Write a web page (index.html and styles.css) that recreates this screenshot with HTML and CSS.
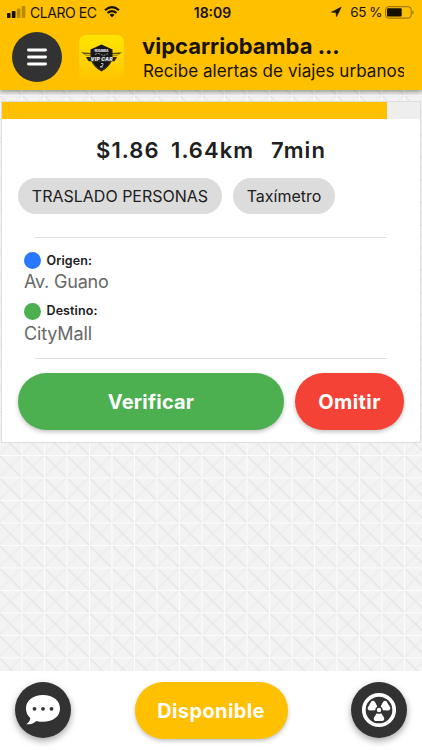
FILE: index.html
```html
<!DOCTYPE html>
<html lang="es">
<head>
<meta charset="utf-8">
<title>vipcarriobamba</title>
<link rel="stylesheet" href="styles.css">
</head>
<body>
<div class="app">
  <header class="header">
    <div class="status">
      <div class="status-left">
        <svg class="signal" width="19" height="12" viewBox="0 0 19 12"><rect x="0" y="7" width="3.5" height="5" rx=".8"/><rect x="4.8" y="5" width="3.7" height="7" rx=".8"/><g opacity=".3"><rect x="9.8" y="2.5" width="3.6" height="9.5" rx=".8"/><rect x="14.7" y="0" width="3.6" height="12" rx=".8"/></g></svg>
        <span class="carrier">CLARO EC</span>
        <svg class="wifi" width="16" height="12" viewBox="0 0 16 12"><g fill="none" stroke="#171200" stroke-width="2.1"><path d="M1 4.2Q8-2 15 4.2"/><path d="M3.5 7Q8 3.1 12.5 7"/></g><path d="M5.5 8.8Q8 6.8 10.5 8.8L8 11.6Z"/></svg>
      </div>
      <span class="clock">18:09</span>
      <div class="status-right">
        <svg width="11" height="12" viewBox="0 0 12 12"><path d="M.5 6.200 11.200.6 6 11.200 5.500 6.500Z" stroke="#171200" stroke-width=".6"/></svg>
        <span class="percent">65 %</span>
        <svg width="30" height="13" viewBox="0 0 30 13"><rect x=".6" y=".7" width="25.6" height="11.4" rx="3" fill="none" stroke="#8d6a00"/><rect x="2" y="2.3" width="14.7" height="8.2" rx="1"/><path d="M27.4 4.2q2.6 2.2 0 4.4z" fill="#8d6a00"/></svg>
      </div>
    </div>
    <div class="brand">
      <div class="menu"><svg width="20" height="18" viewBox="0 0 20 18"><path d="M1.4 2h17.2M1.4 9h17.2M1.4 16h17.2" stroke="#fff" stroke-width="2.8" stroke-linecap="round"/></svg></div>
      <div class="logo">
        <svg width="45" height="45" viewBox="0 0 45 45">
          <path d="M2 17.2 13 18v2.4H6.5ZM43 17.2 32 18v2.4h6.5Z" fill="#665500"/>
          <path d="M5 19h9v1H6ZM31 19h9l-1 1h-8Z" fill="#d7b600"/>
          <path d="M22.5 9.5 33.5 14.5V24Q31 32 22.5 36.5 14 32 11.5 24V14.5Z" fill="#171717"/>
          <path d="M13 26.2h19Q29.5 32 22.5 35.2 15.5 32 13 26.2" fill="none" stroke="#635b24" stroke-width=".6"/>
          <path d="M7 22h31l-2.5 4.3h-26Z" fill="#222"/>
          <path d="M16 19.5q3-2 6 0t7-1" fill="none" stroke="#bbb" stroke-width=".8" stroke-dasharray="2 1"/>
          <text class="logo-small" x="22.5" y="17.2" text-anchor="middle" textLength="14">RIOBAMBA</text>
          <text class="logo-name" x="22.5" y="25.8" text-anchor="middle" textLength="22">VIP CAR</text>
          <path d="M22 28.5h2v2l-3 1.5h3" fill="none" stroke="#ddd" stroke-width=".8"/>
        </svg>
      </div>
      <div class="titles"><h1 class="title">vipcarriobamba ...</h1><p class="subtitle">Recibe alertas de viajes urbanos</p></div>
    </div>
  </header>
  <main class="content">
    <section class="card">
      <div class="progress"><div class="progress-fill"></div></div>
      <div class="summary"><span>$1.86</span><span class="distance">1.64km</span><span class="time">7min</span></div>
      <div class="chips"><span class="chip chip-service">TRASLADO PERSONAS</span><span class="chip chip-meter">Taxímetro</span></div>
      <div class="route">
        <div class="stop"><div class="label"><i class="dot blue"></i><span>Origen:</span></div><div class="place guano">Av. Guano</div></div>
        <div class="stop"><div class="label label-end"><i class="dot green"></i><span>Destino:</span></div><div class="place">CityMall</div></div>
      </div>
      <div class="actions"><button class="btn verify">Verificar</button><button class="btn skip">Omitir</button></div>
    </section>
  </main>
  <footer class="footer">
    <div class="round"><svg width="36" height="32" viewBox="0 0 36 32"><path d="M18 1C8 1 1 6.5 1 14.500c0 4 1.600 7.200 4.300 9.500-.3 3-1.800 4.800-4 6.200 4.200.5 7.500-1 10.200-3.300 2 .6 4.200.9 6.500.9 10 0 17-5.400 17-13.300S28 1 18 1Z" fill="#fff"/><g fill="#323232"><circle cx="9.500" cy="14.800" r="1.900"/><circle cx="18" cy="14.800" r="1.900"/><circle cx="26.500" cy="14.800" r="1.900"/></g></svg></div>
    <button class="btn available">Disponible</button>
    <div class="round"><svg width="36" height="36" viewBox="-18 -18 36 36"><circle r="15.200" fill="none" stroke="#fff" stroke-width="3.700"/><g fill="#fff"><circle r="2.200"/><path id="blade" d="M-2.200 3.200Q0 4.400 2.200 3.200L5 7.500Q5.900 10 3.800 10.900H-3.800Q-5.900 10-5 7.500Z"/><use href="#blade" transform="rotate(120)"/><use href="#blade" transform="rotate(240)"/></g></svg></div>
  </footer>
</div>
</body>
</html>
```

FILE: styles.css
```css
* { box-sizing: border-box; }
body { margin: 0; font-family: Inter, "Liberation Sans", sans-serif; color: #202020; }
svg { display: block; flex: none; }
h1, p { margin: 0; }
button { border: 0; padding: 0; font-family: inherit; }

.app { width: 422px; height: 750px; display: flex; flex-direction: column; overflow: hidden; }
.header { height: 90px; flex: none; background: #ffc000; color: #171200; box-shadow: 0 2px 5px rgba(0,0,0,.4); z-index: 1; }
.status { height: 24px; display: grid; grid-template-columns: 1fr auto 1fr; align-items: center; padding: 0 7px; }
.status svg { fill: #171200; }
.status-left, .status-right { display: flex; align-items: center; }
.status-right { justify-content: flex-end; }
.carrier { font-size: 14px; margin: 0 7px 0 4px; letter-spacing: -.45px; white-space: nowrap; }
.clock { font-size: 14px; font-weight: 600; padding-left: 3px; }
.percent { font-size: 13.500px; margin: 0 3px 0 8px; letter-spacing: -.5px; white-space: nowrap; }

.brand { display: flex; height: 66px; padding: 0 18px 0 12px; align-items: center; }
.menu { width: 50px; height: 50px; border-radius: 50%; background: #323232; display: grid; place-items: center; flex: none; }
.logo { width: 45px; height: 45px; margin-left: 17px; border-radius: 7px; overflow: hidden; background: linear-gradient(#ffe500, #ffc400); flex: none; }
.logo-name { font: italic 900 5px Inter, sans-serif; fill: #e6e6e6; }
.logo-small { font: 800 3px Inter, sans-serif; fill: #ddd; }
.titles { width: 262px; margin-left: 18px; overflow: hidden; white-space: nowrap; }
.title { font-size: 22px; line-height: 26px; font-weight: 700; padding-top: 1px; }
.subtitle { font-size: 17px; line-height: 24px; padding-left: 1px; letter-spacing: .06px; }

.content {
  flex: 1; padding: 11px 1px 0;
  background-color: #f3f3f3;
  background-image:
    linear-gradient(90deg, #fcfcfc 1px, transparent 1px),
    linear-gradient(#fcfcfc 1px, transparent 1px),
    linear-gradient(to top right, transparent 46%, #e5e5e5 49%, #e5e5e5 51%, transparent 54%),
    linear-gradient(to bottom right, transparent 45%, #ededed 49%, #ededed 51%, transparent 55%);
  background-size: 22.5px 22.5px;
  background-position: -1px 5px;
}
.card { height: 342px; border: 1px solid #dedede; background: #fff; }
.progress { height: 17px; background: #eee; }
.progress-fill { width: 385px; height: 100%; background: #ffc000; }
.summary { height: 59px; display: flex; justify-content: center; align-items: center; font-size: 22px; font-weight: 600; padding-top: 2px; letter-spacing: 1.050px; }
.distance { margin-left: 11.500px; }
.time { margin-left: 17px; }
.chips { display: flex; gap: 11px; padding-left: 16px; }
.chip { height: 36px; border-radius: 18px; background: #dcdcdc; font-size: 16px; display: flex; align-items: center; justify-content: center; white-space: nowrap; padding-bottom: 1px; }
.chip-service { width: 204px; }
.chip-meter { width: 102px; }
.route { height: 122px; margin: 23px 33px 0; border-top: 1px solid #e0e0e0; border-bottom: 1px solid #e0e0e0; padding-top: 12px; }
.stop { height: 51.5px; margin-left: -11px; }
.label { display: flex; align-items: center; gap: 5.500px; height: 20px; font-size: 12.500px; font-weight: 600; letter-spacing: .1px; }
.label-end span { margin-top: -3px; }
.dot { width: 17px; height: 17px; border-radius: 50%; }
.blue { background: #2979ff; }
.green { background: #4caf50; }
.place { font-size: 18px; line-height: 23px; color: #686868; letter-spacing: -.15px; }
.guano { letter-spacing: -.2px; }
.actions { display: flex; gap: 11px; padding: 14px 0 0 16px; }
.btn { height: 57px; border-radius: 29px; color: #fff; font-size: 20px; font-weight: 700; box-shadow: 0 2px 4px rgba(0,0,0,.24); }
.verify { width: 266px; background: #4caf50; letter-spacing: .2px; }
.skip { width: 109px; background: #f44336; letter-spacing: .4px; }

.footer { height: 79px; flex: none; background: #fff; display: flex; justify-content: space-between; align-items: center; padding: 0 15px 1px; }
.round { width: 56px; height: 56px; border-radius: 50%; background: #323232; display: grid; place-items: center; box-shadow: 0 3px 7px rgba(0,0,0,.35); }
.available { width: 153px; padding-top: 2px; background: #ffc000; letter-spacing: .4px; }
```
